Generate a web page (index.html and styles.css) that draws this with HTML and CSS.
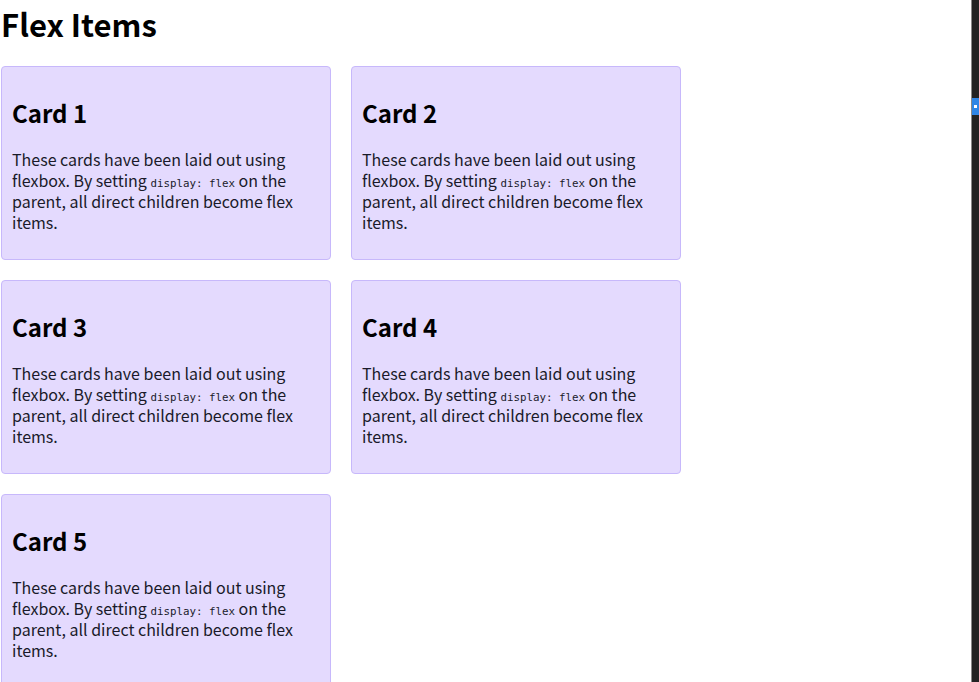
FILE: index.html
```html
<!DOCTYPE html>
<html lang="en">
<head>
<meta charset="utf-8">
<title>Flex Items</title>
<link rel="stylesheet" href="styles.css">
</head>
<body>
<h1 class="title">Flex Items</h1>
<div class="cards">
  <div class="card">
    <h2 class="card-title">Card 1</h2>
    <p class="card-text">These cards have been laid out using flexbox. By setting <code class="code">display: flex</code> on the parent, all direct children become flex items.</p>
  </div>
  <div class="card">
    <h2 class="card-title">Card 2</h2>
    <p class="card-text">These cards have been laid out using flexbox. By setting <code class="code">display: flex</code> on the parent, all direct children become flex items.</p>
  </div>
  <div class="card">
    <h2 class="card-title">Card 3</h2>
    <p class="card-text">These cards have been laid out using flexbox. By setting <code class="code">display: flex</code> on the parent, all direct children become flex items.</p>
  </div>
  <div class="card">
    <h2 class="card-title">Card 4</h2>
    <p class="card-text">These cards have been laid out using flexbox. By setting <code class="code">display: flex</code> on the parent, all direct children become flex items.</p>
  </div>
  <div class="card">
    <h2 class="card-title">Card 5</h2>
    <p class="card-text">These cards have been laid out using flexbox. By setting <code class="code">display: flex</code> on the parent, all direct children become flex items.</p>
  </div>
</div>
<div class="edge-strip"><span class="edge-marker"></span></div>
</body>
</html>
```

FILE: styles.css
```css
html, body {
  margin: 0;
  padding: 0;
  background: #ffffff;
}

body {
  font-family: "Noto Sans CJK KR", "Noto Sans", sans-serif;
  color: #111111;
  overflow: hidden;
}

.title {
  margin: 2px 0 20px 1px;
  font-size: 31px;
  line-height: 43px;
  font-weight: 700;
  color: #000000;
}

.cards {
  display: flex;
  flex-wrap: wrap;
  gap: 20px;
  width: 682px;
  padding: 1px;
  box-sizing: border-box;
}

.card {
  box-sizing: border-box;
  width: 330px;
  padding: 10px;
  background: #e4dafe;
  border: 1px solid #c7b8fb;
  border-radius: 4px;
}

.card-title {
  margin: 20px 0;
  font-size: 24px;
  line-height: 32px;
  font-weight: 700;
  color: #000000;
}

.card-text {
  margin: 0 0 16px 0;
  font-size: 16px;
  line-height: 21px;
  color: #1a1a2a;
}

.code {
  font-family: "DejaVu Sans Mono", monospace;
  font-size: 10.8px;
  line-height: 1;
}

.edge-strip {
  position: fixed;
  top: 0;
  right: 0;
  width: 7px;
  height: 100%;
  background: #232323;
  border-left: 1px solid #8a8a8a;
}

.edge-marker {
  position: absolute;
  top: 98px;
  left: 0;
  width: 7px;
  height: 17px;
  background: #2f86e6;
}

.edge-marker::after {
  content: "";
  position: absolute;
  top: 7px;
  left: 2px;
  width: 3px;
  height: 3px;
  background: #ffffff;
}
```
